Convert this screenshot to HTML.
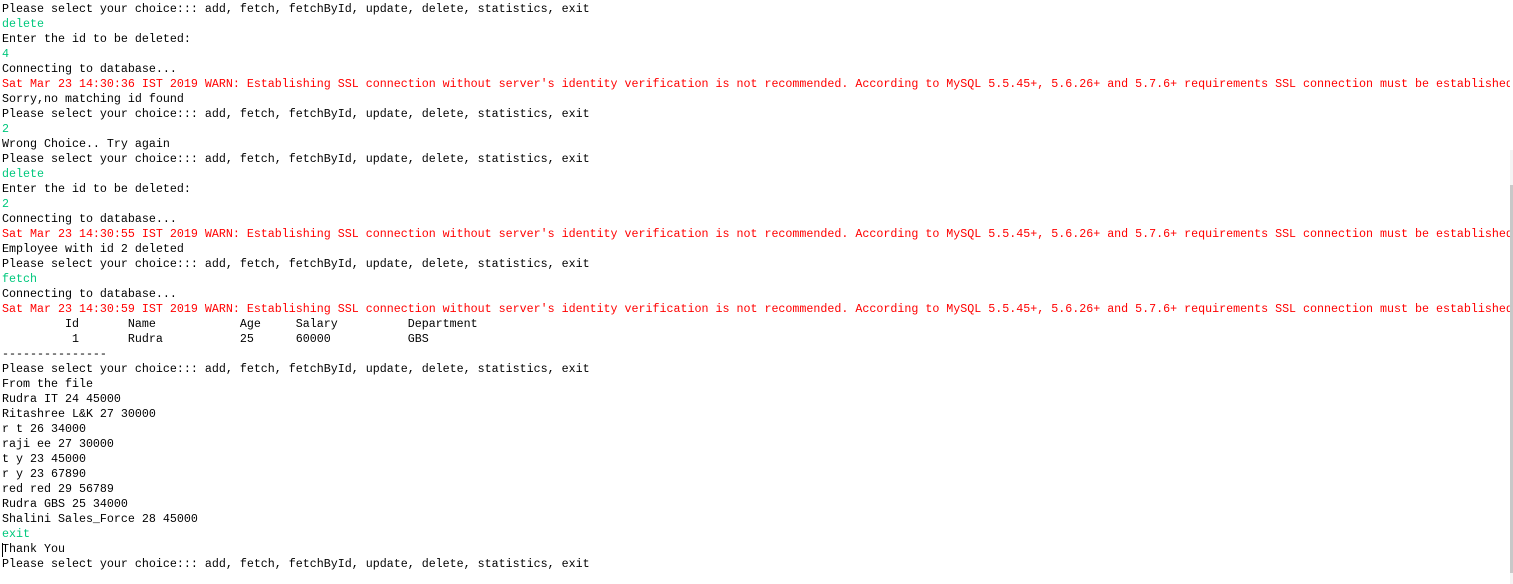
<!DOCTYPE html>
<html><head><style>
html,body{margin:0;padding:0;background:#fff;width:1513px;height:584px;overflow:hidden}
.wrap{position:absolute;top:2px;left:0;width:1510px;height:582px;overflow:hidden}
pre{margin:0;padding:0 0 0 2px;font-family:"Liberation Mono",monospace;font-size:11.67px;line-height:15px;color:#000;white-space:pre}
.g{color:#00c87d}.r{color:#ff0000}
.track{position:absolute;right:0;top:150px;width:3px;height:434px;background:#f4f4f4}
.thumb{position:absolute;right:0;top:185px;width:3px;height:388px;background:#c8c8c8}
.cur{position:absolute;left:2px;top:543px;width:1px;height:14px;background:#000}
</style></head><body>
<div class="wrap"><pre>Please select your choice::: add, fetch, fetchById, update, delete, statistics, exit
<span class="g">delete</span>
Enter the id to be deleted:
<span class="g">4</span>
Connecting to database...
<span class="r">Sat Mar 23 14:30:36 IST 2019 WARN: Establishing SSL connection without server's identity verification is not recommended. According to MySQL 5.5.45+, 5.6.26+ and 5.7.6+ requirements SSL connection must be established</span>
Sorry,no matching id found
Please select your choice::: add, fetch, fetchById, update, delete, statistics, exit
<span class="g">2</span>
Wrong Choice.. Try again
Please select your choice::: add, fetch, fetchById, update, delete, statistics, exit
<span class="g">delete</span>
Enter the id to be deleted:
<span class="g">2</span>
Connecting to database...
<span class="r">Sat Mar 23 14:30:55 IST 2019 WARN: Establishing SSL connection without server's identity verification is not recommended. According to MySQL 5.5.45+, 5.6.26+ and 5.7.6+ requirements SSL connection must be established</span>
Employee with id 2 deleted
Please select your choice::: add, fetch, fetchById, update, delete, statistics, exit
<span class="g">fetch</span>
Connecting to database...
<span class="r">Sat Mar 23 14:30:59 IST 2019 WARN: Establishing SSL connection without server's identity verification is not recommended. According to MySQL 5.5.45+, 5.6.26+ and 5.7.6+ requirements SSL connection must be established</span>
         Id       Name            Age     Salary          Department
          1       Rudra           25      60000           GBS
---------------
Please select your choice::: add, fetch, fetchById, update, delete, statistics, exit
From the file
Rudra IT 24 45000
Ritashree L&amp;K 27 30000
r t 26 34000
raji ee 27 30000
t y 23 45000
r y 23 67890
red red 29 56789
Rudra GBS 25 34000
Shalini Sales_Force 28 45000
<span class="g">exit</span>
Thank You
Please select your choice::: add, fetch, fetchById, update, delete, statistics, exit</pre></div>
<div class="cur"></div>
<div class="track"></div><div class="thumb"></div>
</body></html>
